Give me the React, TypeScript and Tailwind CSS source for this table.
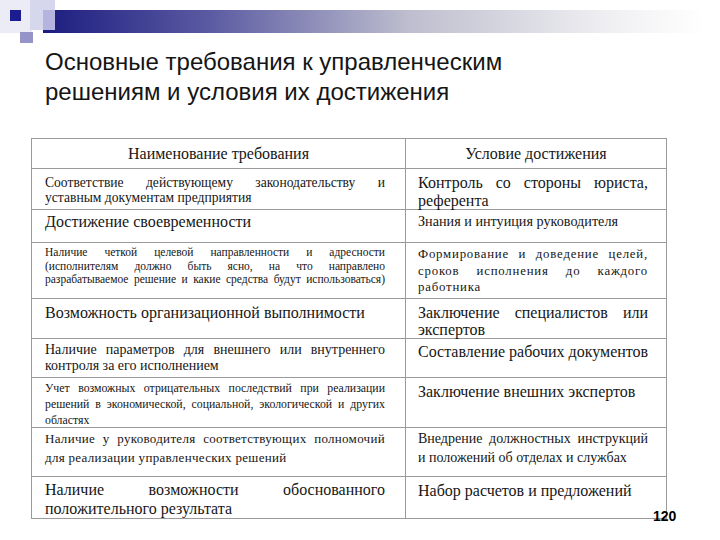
import type { ReactNode } from "react";

type Line = { t: string; j?: boolean };

type Cell = {
  lines: Line[];
  className: string;
};

type Row = {
  h: string;
  left: Cell;
  right: Cell;
};

const rows: Row[] = [
  {
    h: "h-[41px]",
    left: {
      className: "pt-[6px] text-[13.6px] leading-[15px]",
      lines: [
        { t: "Соответствие действующему законодательству и", j: true },
        { t: "уставным документам предприятия" },
      ],
    },
    right: {
      className: "pt-[5px] text-[16px] leading-[18px]",
      lines: [{ t: "Контроль со стороны юриста,", j: true }, { t: "референта" }],
    },
  },
  {
    h: "h-[33px]",
    left: {
      className: "pt-[3px] text-[16px] leading-[18px]",
      lines: [{ t: "Достижение своевременности" }],
    },
    right: {
      className: "pt-[3px] text-[14.2px] leading-[16px]",
      lines: [{ t: "Знания и интуиция руководителя" }],
    },
  },
  {
    h: "h-[56px]",
    left: {
      className: "pt-[3px] text-[11.5px] leading-[13.5px]",
      lines: [
        { t: "Наличие четкой целевой направленности и адресности", j: true },
        { t: "(исполнителям должно быть ясно, на что направлено", j: true },
        { t: "разрабатываемое решение и какие средства будут использоваться)", j: true },
      ],
    },
    right: {
      className: "pt-[3px] text-[12.8px] leading-[16.5px] tracking-[0.8px]",
      lines: [
        { t: "Формирование и доведение целей,", j: true },
        { t: "сроков исполнения до каждого", j: true },
        { t: "работника" },
      ],
    },
  },
  {
    h: "h-[40px]",
    left: {
      className: "pt-[5px] text-[16px] leading-[18px]",
      lines: [{ t: "Возможность организационной выполнимости" }],
    },
    right: {
      className: "pt-[5px] text-[16px] leading-[17px]",
      lines: [{ t: "Заключение специалистов или", j: true }, { t: "экспертов" }],
    },
  },
  {
    h: "h-[39px]",
    left: {
      className: "pt-[3px] text-[14px] leading-[16px]",
      lines: [
        { t: "Наличие параметров для внешнего или внутреннего", j: true },
        { t: "контроля за его исполнением" },
      ],
    },
    right: {
      className: "pt-[4px] text-[16px] leading-[18px]",
      lines: [{ t: "Составление рабочих документов" }],
    },
  },
  {
    h: "h-[50px]",
    left: {
      className: "pt-[2px] text-[11.8px] leading-[16px]",
      lines: [
        { t: "Учет возможных отрицательных последствий при реализации", j: true },
        { t: "решений в экономической, социальной, экологической и других", j: true },
        { t: "областях" },
      ],
    },
    right: {
      className: "pt-[5px] text-[16px] leading-[18px]",
      lines: [{ t: "Заключение внешних экспертов" }],
    },
  },
  {
    h: "h-[49px]",
    left: {
      className: "pt-[1px] text-[13px] leading-[19px] tracking-[0.3px]",
      lines: [
        { t: "Наличие у руководителя соответствующих полномочий", j: true },
        { t: "для реализации управленческих решений" },
      ],
    },
    right: {
      className: "pt-[1px] text-[14px] leading-[19px]",
      lines: [
        { t: "Внедрение должностных инструкций", j: true },
        { t: "и положений об отделах и службах" },
      ],
    },
  },
  {
    h: "h-[41px]",
    left: {
      className: "pt-[3px] text-[16px] leading-[19px]",
      lines: [
        { t: "Наличие возможности обоснованного", j: true },
        { t: "положительного результата" },
      ],
    },
    right: {
      className: "pt-[4px] text-[16px] leading-[19px]",
      lines: [{ t: "Набор расчетов и предложений" }],
    },
  },
];

function TextLine({ line }: { line: Line }) {
  if (line.j) {
    return (
      <div className="flex justify-between whitespace-nowrap">
        {line.t.split(" ").map((w, i) => (
          <span key={i}>{w}</span>
        ))}
      </div>
    );
  }
  return <div className="whitespace-nowrap">{line.t}</div>;
}

function CellBox({ cell, side }: { cell: Cell; side: "left" | "right" }): ReactNode {
  return (
    <div
      className={
        side === "left"
          ? `w-[374px] shrink-0 border-r border-[#9a9a9a] pl-[13px] pr-[20px] ${cell.className}`
          : `w-[260px] shrink-0 pl-[12px] pr-[18px] ${cell.className}`
      }
    >
      {cell.lines.map((l, i) => (
        <TextLine key={i} line={l} />
      ))}
    </div>
  );
}

function HeaderDecor() {
  return (
    <svg width="720" height="45" viewBox="0 0 720 45" className="block">
      <defs>
        <linearGradient id="bar" x1="43" y1="0" x2="705" y2="0" gradientUnits="userSpaceOnUse">
          <stop offset="0" stopColor="#1c1c80" />
          <stop offset="0.25" stopColor="#5a5aa2" />
          <stop offset="0.55" stopColor="#bdbdce" />
          <stop offset="0.85" stopColor="#efeff2" />
          <stop offset="1" stopColor="#ffffff" />
        </linearGradient>
      </defs>
      <rect x="0" y="0" width="32" height="33" fill="#ececf6" />
      <rect x="30" y="0" width="25" height="30" fill="#d6d6ec" />
      <rect x="43" y="10" width="662" height="23" fill="url(#bar)" />
      <rect x="43" y="10" width="12" height="20" fill="#b4b4de" />
      <rect x="10" y="10" width="11" height="11" fill="#1c1c92" />
      <rect x="20" y="32" width="13" height="11" fill="#9494c8" />
    </svg>
  );
}

export default function App() {
  return (
    <div className="relative h-[540px] w-[720px] overflow-hidden bg-white text-[#161616]">
      <HeaderDecor />
      <div className="mt-[2px] pl-[45px] font-[Liberation_Sans,Arial,sans-serif] text-[24px] leading-[30px] text-[#151515]">
        <div>Основные требования к управленческим</div>
        <div>решениям и условия их достижения</div>
      </div>

      <div className="ml-[31px] mt-[31px] w-[636px] border border-[#9a9a9a] font-[Liberation_Serif,Times_New_Roman,serif]">
        <div className="flex h-[30px] border-b border-[#9a9a9a] text-[16px]">
          <div className="flex w-[374px] shrink-0 items-center justify-center border-r border-[#9a9a9a]">
            Наименование требования
          </div>
          <div className="flex w-[260px] shrink-0 items-center justify-center">
            Условие достижения
          </div>
        </div>
        {rows.map((r, i) => (
          <div
            key={i}
            className={`flex ${r.h} ${i < rows.length - 1 ? "border-b border-[#9a9a9a]" : ""}`}
          >
            <CellBox cell={r.left} side="left" />
            <CellBox cell={r.right} side="right" />
          </div>
        ))}
      </div>

      <div className="absolute left-[653px] top-[508px] font-[Liberation_Sans,Arial,sans-serif] text-[14px] font-bold leading-[16px] text-black">
        120
      </div>
    </div>
  );
}
